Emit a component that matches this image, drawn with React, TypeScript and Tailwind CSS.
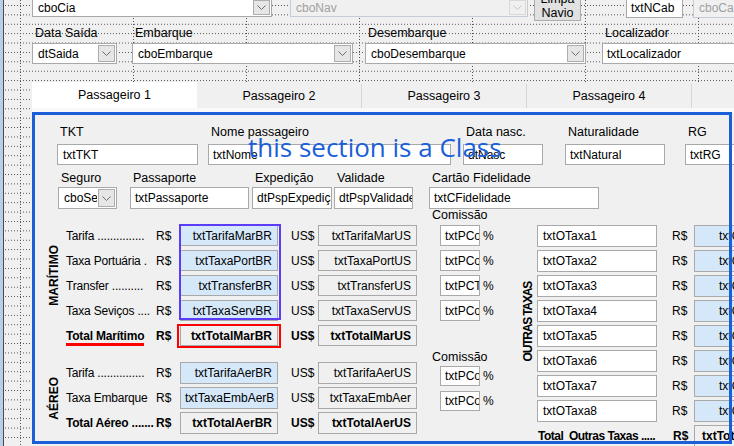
import React from "react";

function Chevron({ off }: { off?: boolean }) {
  return (
    <svg width="9" height="5" viewBox="0 0 9 5" fill="none">
      <path d="M0.5 0.5L4.5 4.5L8.5 0.5" stroke={off ? "#c4c4c4" : "#6d6d6d"} strokeWidth="1" />
    </svg>
  );
}

function Combo({ text, className = "", off }: { text: string; className?: string; off?: boolean }) {
  return (
    <div
      className={`shrink-0 flex border ${
        off ? "border-[#c6ccd5] bg-[#f0f0f0] text-[#a0a0a0]" : "border-[#a9a9a9] bg-white"
      } ${className}`}
    >
      <div className="flex-1 min-w-0 overflow-hidden whitespace-nowrap flex items-center pl-[5px] text-[12px]">
        {text}
      </div>
      <div
        className={`shrink-0 w-[17px] m-[1px] flex items-center justify-center border ${
          off ? "border-[#d9d9d9] bg-[#f0f0f0]" : "border-[#adadad] bg-[#e6e6e6]"
        }`}
      >
        <Chevron off={off} />
      </div>
    </div>
  );
}

function Box({ children, className = "" }: { children?: React.ReactNode; className?: string }) {
  return (
    <div
      className={`shrink-0 border border-[#a9a9a9] flex items-center overflow-hidden whitespace-nowrap text-[12px] ${className}`}
    >
      {children}
    </div>
  );
}

function Field({ label, className = "", children }: { label: string; className?: string; children: React.ReactNode }) {
  return (
    <div className={`shrink-0 flex flex-col ${className}`}>
      <div className="h-[16px] leading-[16px] pl-[3px] text-[12.5px] whitespace-nowrap">{label}</div>
      {children}
    </div>
  );
}

function VLabel({ text, className = "" }: { text: string; className?: string }) {
  return (
    <div className={`shrink-0 w-[16px] flex items-center justify-center ${className}`}>
      <span className="[writing-mode:vertical-rl] rotate-180 font-bold text-[12px] whitespace-nowrap leading-none">
        {text}
      </span>
    </div>
  );
}

type Row = {
  label: React.ReactNode;
  br: string;
  us: string;
  total?: boolean;
  brLeft?: boolean;
};

function MoneyRow({ r, h }: { r: Row; h: string }) {
  const b = r.total ? "font-bold" : "";
  return (
    <div className={`flex items-center ${h}`}>
      <div className={`w-[90px] shrink-0 whitespace-nowrap text-[12px] tracking-[-0.2px] ${b}`}>{r.label}</div>
      <div className={`w-[24px] shrink-0 text-[12px] ${b}`}>R$</div>
      <Box
        className={`w-[98px] h-full ${r.total ? "bg-[#f0f0f0] font-bold" : "bg-[#d5e8fa]"} ${
          r.brLeft ? "pl-[4px]" : "justify-end pr-[5px]"
        }`}
      >
        {r.br}
      </Box>
      <div className={`w-[40px] shrink-0 pl-[13px] text-[12px] ${b}`}>US$</div>
      <Box className={`w-[99px] h-full bg-[#f0f0f0] justify-end pr-[5px] ${b}`}>{r.us}</Box>
    </div>
  );
}

function PcRow({ text, h }: { text: string; h: string }) {
  return (
    <div className={`flex items-center ${h}`}>
      <Box className="w-[40px] h-full bg-white pl-[4px]">{text}</Box>
      <span className="ml-[3px] text-[12px]">%</span>
    </div>
  );
}

const maritimo: Row[] = [
  { label: "Tarifa ...............", br: "txtTarifaMarBR", us: "txtTarifaMarUS" },
  { label: "Taxa Portuária .", br: "txtTaxaPortBR", us: "txtTaxaPortUS" },
  { label: "Transfer ..........", br: "txtTransferBR", us: "txtTransferUS" },
  { label: "Taxa Seviços ....", br: "txtTaxaServBR", us: "txtTaxaServUS" },
  {
    label: (
      <span className="inline-block leading-[14px] border-b-[3px] border-[#ff0000] -mb-[3px]">Total Marítimo</span>
    ),
    br: "txtTotalMarBR",
    us: "txtTotalMarUS",
    total: true,
  },
];

const aereo: Row[] = [
  { label: "Tarifa ...............", br: "txtTarifaAerBR", us: "txtTarifaAerUS" },
  { label: "Taxa Embarque", br: "txtTaxaEmbAerB", us: "txtTaxaEmbAer", brLeft: true },
  { label: "Total Aéreo .......", br: "txtTotalAerBR", us: "txtTotalAerUS", total: true },
];

export default function App() {
  return (
    <div className="w-[734px] h-[446px] overflow-hidden flex bg-[#f0f0f0] text-black font-['Liberation_Sans',Arial,sans-serif]">
      <div className="w-[3px] shrink-0 bg-[#b6cfea]" />
      <div className="w-px shrink-0 bg-[#4a4a4a]" />
      <div className="relative flex-1 min-w-0 flex flex-col [background-image:conic-gradient(at_1px_1px,transparent_270deg,#505050_270deg),conic-gradient(at_1px_1px,transparent_270deg,#505050_270deg)] [background-size:3px_9.4px,113px_3px] [background-position:1px_5px,16px_0px]">
        {/* top row, cut at the window edge */}
        <div className="flex items-start pl-[28px] -mt-[2px] h-[23px] shrink-0">
          <Combo className="w-[240px] h-[19px]" text="cboCia" />
          <Combo className="w-[238px] h-[19px] ml-[18px]" text="cboNav" off />
          <div className="shrink-0 ml-[6px] w-[47px] h-[35px] -mt-[12px] bg-[#e1e1e1] border border-[#adadad] flex flex-col items-center justify-end text-[12.5px] leading-[14px]">
            <span>Limpa</span>
            <span>Navio</span>
          </div>
          <Box className="ml-[45px] w-[57px] h-[20px] bg-white pl-[4px]">txtNCab</Box>
          <Combo className="w-[100px] h-[20px] ml-[10px]" text="cboCa" off />
        </div>

        <div className="flex pl-[28px] mt-[4px] shrink-0">
          <Field label="Data Saída" className="w-[85px]">
            <Combo className="mt-[2px] h-[21px]" text="dtSaida" />
          </Field>
          <Field label="Embarque" className="w-[221px] ml-[15px]">
            <Combo className="mt-[2px] h-[21px]" text="cboEmbarque" />
          </Field>
          <Field label="Desembarque" className="w-[221px] ml-[12px]">
            <Combo className="mt-[2px] h-[21px]" text="cboDesembarque" />
          </Field>
          <Field label="Localizador" className="w-[200px] ml-[16px]">
            <Box className="mt-[2px] h-[21px] bg-white pl-[4px]">txtLocalizador</Box>
          </Field>
        </div>

        {/* tabs */}
        <div className="flex pl-[28px] h-[26px] mt-[18px] shrink-0 text-[12.5px]">
          <div className="shrink-0 w-[165px] bg-white flex items-center justify-center">Passageiro 1</div>
          {["Passageiro 2", "Passageiro 3", "Passageiro 4", ""].map((t) => (
            <div
              key={t || "x"}
              className="shrink-0 w-[165px] mt-[2px] bg-[#f0f0f0] border-r border-[#d6d6d6] flex items-center justify-center pt-[1px]"
            >
              {t}
            </div>
          ))}
        </div>

        {/* tab page */}
        <div className="relative ml-[28px] flex-1 bg-[#f0f0f0] border-t-[4px] border-[#f9f9f9] pt-[12px]">
          <div className="flex pl-[25px]">
            <Field label="TKT" className="w-[141px]">
              <Box className="mt-[4px] h-[21px] bg-white pl-[5px]">txtTKT</Box>
            </Field>
            <Field label="Nome passageiro" className="w-[243px] ml-[10px]">
              <Box className="mt-[4px] h-[21px] bg-white pl-[4px]">txtNome</Box>
            </Field>
            <Field label="Data nasc." className="w-[80px] ml-[12px]">
              <Box className="mt-[4px] h-[21px] bg-white pl-[4px]">dtNasc</Box>
            </Field>
            <Field label="Naturalidade" className="w-[100px] ml-[22px]">
              <Box className="mt-[4px] h-[21px] bg-white pl-[4px]">txtNatural</Box>
            </Field>
            <Field label="RG" className="w-[60px] ml-[20px]">
              <Box className="mt-[4px] h-[21px] bg-white pl-[4px]">txtRG</Box>
            </Field>
          </div>

          <div className="relative z-[1] flex pl-[26px] mt-[5px]">
            <Field label="Seguro" className="w-[59px]">
              <Combo className="mt-[1px] h-[22px]" text="cboSeguro" />
            </Field>
            <Field label="Passaporte" className="w-[119px] ml-[13px]">
              <Box className="mt-[1px] h-[22px] bg-white pl-[4px]">txtPassaporte</Box>
            </Field>
            <Field label="Expedição" className="w-[80px] ml-[3px]">
              <Box className="mt-[1px] h-[22px] bg-white pl-[4px]">dtPspExpedição</Box>
            </Field>
            <Field label="Validade" className="w-[79px] ml-[2px]">
              <Box className="mt-[1px] h-[22px] bg-white pl-[4px]">dtPspValidade</Box>
            </Field>
            <Field label="Cartão Fidelidade" className="w-[170px] ml-[16px]">
              <Box className="mt-[1px] h-[22px] bg-white pl-[4px]">txtCFidelidade</Box>
            </Field>
          </div>

          {/* money block */}
          <div className="flex items-start pl-[14px] -mt-[2px]">
            <div className="shrink-0 flex flex-col">
              <div className="flex items-start">
                <VLabel text="MARÍTIMO" className="mt-[18px] h-[100px]" />
                <div className="ml-[4px] mt-[18px] flex flex-col gap-[4px]">
                  {maritimo.map((r) => (
                    <MoneyRow key={r.br} r={r} h="h-[21px]" />
                  ))}
                </div>
                <div className="shrink-0 ml-[23px] w-[53px] flex flex-col">
                  <div className="h-[16px] leading-[16px] -ml-[8px] text-[12.5px] whitespace-nowrap">Comissão</div>
                  <div className="mt-[2px] flex flex-col gap-[4px]">
                    {["txtPCo", "txtPCo ", "txtPCT", "txtPCo  "].map((t) => (
                      <PcRow key={t} text={t.trim()} h="h-[21px]" />
                    ))}
                  </div>
                </div>
              </div>

              <div className="flex items-start mt-[4px]">
                <VLabel text="AÉREO" className="mt-[12px] h-[72px]" />
                <div className="ml-[4px] mt-[12px] flex flex-col gap-[3px]">
                  {aereo.map((r) => (
                    <MoneyRow key={r.br} r={r} h="h-[22px]" />
                  ))}
                </div>
                <div className="shrink-0 ml-[23px] w-[53px] flex flex-col">
                  <div className="h-[14px] leading-[14px] -ml-[8px] text-[12.5px] whitespace-nowrap">Comissão</div>
                  <div className="mt-[2px] flex flex-col gap-[5px]">
                    {["txtPCo", "txtPCo "].map((t) => (
                      <PcRow key={t} text={t.trim()} h="h-[20px]" />
                    ))}
                  </div>
                </div>
              </div>
            </div>

            <div className="shrink-0 flex items-start ml-[27px]">
              <VLabel text="OUTRAS TAXAS" className="mt-[18px] h-[194px] tracking-[-1.2px]" />
              <div className="ml-[1px] mt-[18px] flex flex-col gap-[3px]">
                {[1, 2, 3, 4, 5, 6, 7, 8].map((n) => (
                  <div key={n} className="flex items-center h-[22px]">
                    <Box className="w-[120px] h-full bg-white pl-[5px]">txtOTaxa{n}</Box>
                    <div className="shrink-0 w-[37px] pl-[15px] text-[12px]">R$</div>
                    <Box className="w-[110px] h-full bg-[#d5e8fa] pl-[24px]">txtOTaxaVlr{n}</Box>
                  </div>
                ))}
                <div className="flex items-center h-[22px] font-bold">
                  <div className="shrink-0 w-[136px] pl-[1px] text-[12px] tracking-[-0.5px] whitespace-pre">
                    Total  Outras Taxas .....
                  </div>
                  <div className="shrink-0 w-[21px] text-[12px]">R$</div>
                  <Box className="w-[110px] h-full bg-[#f0f0f0] pl-[7px]">txtTotalOutras</Box>
                </div>
              </div>
            </div>
          </div>

          {/* design-view markers drawn over the controls */}
          <div className="absolute left-[147px] top-[112px] w-[102px] h-[96px] border-2 border-[#5b3df5] z-[2]" />
          <div className="absolute left-[145px] top-[212px] w-[104px] h-[24px] border-2 border-[#ff0000] z-[2]" />
          <div className="absolute left-0 top-0 w-[700px] h-[332px] border-[3px] border-[#1a5fd8] z-[2]" />
          <div className="absolute left-[216px] top-[22px] z-[3] font-['Open_Sans',sans-serif] text-[26px] leading-[26px] text-[#1a5fd8] whitespace-nowrap">
            this section is a Class
          </div>
        </div>
      </div>
    </div>
  );
}
